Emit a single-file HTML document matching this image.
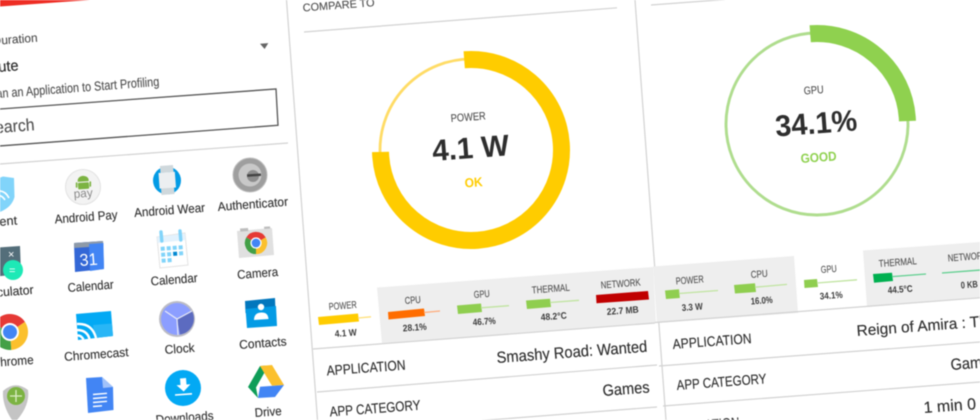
<!DOCTYPE html>
<html><head><meta charset="utf-8"><style>
html,body{margin:0;padding:0;background:#fff;width:980px;height:420px;overflow:hidden}
svg{display:block;filter:blur(.45px)}
text{font-family:"Liberation Sans",sans-serif}
.g{fill:#4f4f4f;stroke:#4f4f4f;stroke-width:.12}.s{font-size:10px;fill:#4f4f4f;stroke:#4f4f4f;stroke-width:.1}.v{font-size:9.5px;font-weight:bold;fill:#3d3d3d}
.a{font-size:12.5px;fill:#333;stroke:#333;stroke-width:.15}.t{font-size:14px;fill:#2f2f2f;stroke:#2f2f2f;stroke-width:.15}.w{font-size:16px;fill:#2e2e2e;stroke:#2e2e2e;stroke-width:.15}
.ln{stroke:#d2d2d2;stroke-width:1.2;fill:none}
</style></head><body>
<svg width="980" height="420" viewBox="0 0 980 420" xmlns="http://www.w3.org/2000/svg">
<defs>
<g id="chr"><path d="M0 0L-15.6 -9A18 18 0 0 1 15.6 -9Z" fill="#e53935"/><path d="M0 0L15.6 -9A18 18 0 0 1 0 18Z" fill="#fbc02d"/><path d="M0 0L0 18A18 18 0 0 1 -15.6 -9Z" fill="#43a047"/><circle r="9" fill="#fff"/><circle r="7" fill="#4285f4"/></g>
</defs>
<rect width="980" height="420" fill="#fff"/>
<!-- red bar -->
<polygon points="0,0 90,0 0,6.5" fill="#ee2d24"/>
<!-- dividers -->
<path class="ln" d="M286.5 0L317.5 420M635 0L666 420"/>
<!-- left panel -->
<text class="g" x="-7" y="45" font-size="12" textLength="45" lengthAdjust="spacingAndGlyphs" transform="rotate(-4.3 -7 45)">Duration</text>
<polygon points="260,43.7 268.3,43.1 264.6,49" fill="#666"/>
<text x="-37" y="74.5" font-size="15" fill="#2b2b2b" stroke="#2b2b2b" stroke-width=".2" textLength="56" lengthAdjust="spacingAndGlyphs" transform="rotate(-4.3 -37 74.5)">1 Minute</text>
<text class="g" x="-16" y="99" font-size="13" textLength="176" lengthAdjust="spacingAndGlyphs" transform="rotate(-4.3 -16 99)">Scan an Application to Start Profiling</text>
<polygon points="-10,109.7 276,89 278,125.3 -10,146.7" fill="#fff" stroke="#555" stroke-width="1.3"/>
<text class="g" x="-15" y="134" font-size="17" textLength="50" lengthAdjust="spacingAndGlyphs" transform="rotate(-4.3 -15 134)">Search</text>
<path class="ln" d="M0 164L288 143"/>
<!-- row1 icons -->
<path d="M-12 182L3 176.5L14 178L14.5 197Q12 207 0 212Q-12 207 -13 197Z" fill="#81d4fa"/>
<path d="M-3 191Q5 190 9 198M-3 195.5Q2 195 5 200" stroke="#fff" stroke-width="1.6" fill="none"/>
<circle cx="83" cy="187" r="17.5" fill="#f3f3f3" stroke="#e2e2e2"/>
<path d="M78 180.8a5.5 4.5 0 0 1 11 -.8v1.5h-11z" fill="#7cb342" transform="rotate(-4 83 185)"/>
<rect x="78" y="182.6" width="11" height="6.5" rx="1" fill="#7cb342" transform="rotate(-4 83 185)"/>
<path d="M76.6 183V187M90.3 182V186" stroke="#7cb342" stroke-width="1.6" stroke-linecap="round"/>
<text x="74" y="198" font-size="12" fill="#8a8a8a" textLength="19" lengthAdjust="spacingAndGlyphs" transform="rotate(-4.3 74 198)">pay</text>
<circle cx="167" cy="180.5" r="14" fill="#039be5"/>
<polygon points="160,166 173,165 173.5,172 160.5,173" fill="#cfd8dc"/><polygon points="161,188 174,187 174.5,194 161.5,195" fill="#cfd8dc"/>
<polygon points="158.5,173 174.8,171.7 176,187.5 159.6,188.6" fill="#eceff1"/>
<circle cx="250" cy="175" r="17" fill="#9e9e9e" stroke="#bdbdbd"/><circle cx="250" cy="175" r="11.5" fill="#c8c8c8"/><circle cx="253" cy="176" r="6" fill="#8d8d8d"/><rect x="247" y="174" width="14" height="2.4" fill="#444" transform="rotate(-4 253 175)"/>
<!-- row1 labels -->
<text class="a" x="-16" y="227" textLength="33.500" lengthAdjust="spacingAndGlyphs" transform="rotate(-4.3 -16 227)">Agent</text>
<text class="a" x="55" y="223.5" textLength="63" lengthAdjust="spacingAndGlyphs" transform="rotate(-4.3 55 223.5)">Android Pay</text>
<text class="a" x="134.5" y="217" textLength="71" lengthAdjust="spacingAndGlyphs" transform="rotate(-4.3 134.5 217)">Android Wear</text>
<text class="a" x="218" y="211" textLength="70.5" lengthAdjust="spacingAndGlyphs" transform="rotate(-4.3 218 211)">Authenticator</text>
<!-- row2 -->
<polygon points="-10,248 20,246 21,274 -9,277" fill="#546e7a"/>
<text x="8" y="258" font-size="11" fill="#fff">×</text>
<circle cx="13" cy="270" r="10" fill="#1de9b6"/><text x="9" y="274" font-size="11" fill="#fff">=</text>
<polygon points="74,243 103,241 104,269 75,272" fill="#3367d6"/>
<polygon points="74,243 103,241 103.3,246 74.3,248" fill="#8e9aa8"/>
<polygon points="89,244 103.4,243 104,269 90,271" fill="#4285f4"/>
<text x="80" y="266" font-size="17" fill="#fff" textLength="18" lengthAdjust="spacingAndGlyphs" transform="rotate(-4.3 80 266)">31</text>
<polygon points="157,237 185,233 188,265 160,268" fill="#fff" stroke="#e3e3e3"/>
<polygon points="157,237 185,233.5 185.5,240 157.5,243" fill="#e3f2fd"/>
<path d="M161 232L161.8 241M180 231L180.8 240" stroke="#81d4fa" stroke-width="3.4" stroke-linecap="round"/>
<g fill="#81d4fa" transform="rotate(-4.3 172 252)"><rect x="161" y="246" width="4" height="4"/><rect x="167" y="246" width="4" height="4"/><rect x="173" y="246" width="4" height="4"/><rect x="179" y="246" width="4" height="4"/><rect x="161" y="252" width="4" height="4"/><rect x="167" y="252" width="4" height="4"/><rect x="173" y="252" width="4" height="4" fill="#0288d1"/><rect x="179" y="252" width="4" height="4"/><rect x="161" y="258" width="4" height="4"/><rect x="167" y="258" width="4" height="4"/></g>
<polygon points="237,231 272,228 274,255 239,258" fill="#e0e0e0"/>
<polygon points="240,228.500 248,228 248.300,231 240.300,231.600" fill="#bdbdbd"/><polygon points="264,226.800 270,226.400 270.300,228.500 264.300,229" fill="#bdbdbd"/>
<use href="#chr" transform="translate(256 243) scale(.62)"/>
<text class="a" x="-21" y="298" textLength="55" lengthAdjust="spacingAndGlyphs" transform="rotate(-4.3 -21 298)">Calculator</text>
<text class="a" x="68" y="292" textLength="46" lengthAdjust="spacingAndGlyphs" transform="rotate(-4.3 68 292)">Calendar</text>
<text class="a" x="151" y="285.5" textLength="47" lengthAdjust="spacingAndGlyphs" transform="rotate(-4.3 151 285.5)">Calendar</text>
<text class="a" x="237.5" y="279" textLength="41" lengthAdjust="spacingAndGlyphs" transform="rotate(-4.3 237.5 279)">Camera</text>
<!-- row3 -->
<use href="#chr" transform="translate(10 332) rotate(-4)"/>
<polygon points="76,314 111,311 113,336 78,340" fill="#03a9f4"/>
<polygon points="93,325 112,323.5 113,336 95,338" fill="#29b6f6"/>
<path d="M77 324Q92 323 96 338M77 330Q87 330 89.5 339M77 335.5Q81 335 83.5 339.5" stroke="#fff" stroke-width="2.4" fill="none"/>
<circle cx="177" cy="319" r="18" fill="#bcbcc4"/><circle cx="177" cy="319" r="16" fill="#8c9eff"/>
<path d="M177 319L192 311A16 16 0 0 1 180 334.5Z" fill="#5c6bc0"/>
<path d="M165 311L177 319L192 311M177 319L178 335" stroke="#e8eaf6" stroke-width="1.2" fill="none"/>
<polygon points="245,301 275,298 275.5,311 245.5,313" fill="#0277bd"/>
<polygon points="245.5,309 276,306 277,326 247,328" fill="#039be5"/>
<circle cx="261" cy="307" r="3.2" fill="#fff"/><path d="M254 320Q254 313 261 312.500Q268 312 268.500 319Z" fill="#fff"/>
<text class="a" x="-8" y="367" textLength="42" lengthAdjust="spacingAndGlyphs" transform="rotate(-4.3 -8 367)">Chrome</text>
<text class="a" x="64.500" y="361" textLength="64.500" lengthAdjust="spacingAndGlyphs" transform="rotate(-4.3 64.500 361)">Chromecast</text>
<text class="a" x="165" y="354" textLength="30" lengthAdjust="spacingAndGlyphs" transform="rotate(-4.3 165 354)">Clock</text>
<text class="a" x="239.500" y="349" textLength="47.500" lengthAdjust="spacingAndGlyphs" transform="rotate(-4.3 239.500 349)">Contacts</text>
<!-- row4 -->
<path d="M3 391Q15 380 28 390Q30 405 17 420L12 420Q2 405 3 391Z" fill="#c4c4c4"/>
<circle cx="16" cy="396" r="9" fill="#7cb342"/><path d="M10 396H22M16 390V402" stroke="#dcedc8" stroke-width="1.3"/>
<polygon points="86,378 102,377 113,387 113.500,410 88,413" fill="#4285f4"/>
<polygon points="102,377 113,387 103,388" fill="#a1c2fa"/>
<path d="M93 394.500L107 393.300M93 398.500L107 397.300M93 402.500L107 401.300M93 406.500L102 405.800" stroke="#fff" stroke-width="1.400"/>
<circle cx="183" cy="388" r="18" fill="#03a9f4"/>
<path d="M180 378.500L186 378L186.500 384.500L190.500 384.200L183.700 391.500L176.500 385.200L180.500 385Z" fill="#fff"/>
<path d="M175 395L192 393.800" stroke="#fff" stroke-width="1.600"/>
<polygon points="248,387 260,366 268.500,365.500 256,387.500 258,398" fill="#0f9d58"/>
<polygon points="260,366 272,365 284,385 272,385.800" fill="#fbc02d"/>
<polygon points="260,386.800 284,385 275,397 258,398" fill="#4285f4"/>
<text class="a" x="156" y="424" textLength="58" lengthAdjust="spacingAndGlyphs" transform="rotate(-4.300 156 424)">Downloads</text>
<text class="a" x="255" y="417" textLength="27" lengthAdjust="spacingAndGlyphs" transform="rotate(-4.300 255 417)">Drive</text>

<!-- panel 2 -->
<text class="g" x="303" y="11.500" font-size="11" textLength="72" lengthAdjust="spacingAndGlyphs" transform="rotate(-4.300 303 11.500)">COMPARE TO</text>
<path class="ln" d="M304 32L617 7.800M651 5L725 -.5"/>
<circle cx="471" cy="150" r="91" fill="none" stroke="#ffdc66" stroke-width="2.800"/>
<circle cx="471" cy="150" r="90.500" fill="none" stroke="#ffcc00" stroke-width="17" stroke-dasharray="431.200 600" transform="rotate(-94.300 471 150)"/>
<text class="s" x="451" y="122" style="font-size:11px" textLength="35" lengthAdjust="spacingAndGlyphs" transform="rotate(-4.300 451 122)">POWER</text>
<text x="433" y="161" font-size="30" font-weight="bold" fill="#2e2e2e" textLength="77" lengthAdjust="spacingAndGlyphs" transform="rotate(-4.300 433 161)">4.1 W</text>
<text x="465" y="187.500" font-size="13" font-weight="bold" fill="#ffcc00" textLength="18" lengthAdjust="spacingAndGlyphs" transform="rotate(-4.300 465 187.500)">OK</text>
<!-- stats panel 2 -->
<polygon points="377,287.500 653,267 656,323 382,343.500" fill="#eeeeee"/>
<path class="ln" d="M313 349L655 323M317 392L657 365M320 433L657 407"/>
<text class="s" x="329" y="310" textLength="28" lengthAdjust="spacingAndGlyphs" transform="rotate(-4.300 329 310)">POWER</text>
<polygon points="318,317 358,313.500 359,321.500 319,325" fill="#ffcc00"/><path d="M358 318L371 316.800" stroke="#ffe07a" stroke-width="1.300"/>
<text class="v" x="335" y="337" textLength="22" lengthAdjust="spacingAndGlyphs" transform="rotate(-4.300 335 337)">4.1 W</text>
<text class="s" x="405" y="304" textLength="16" lengthAdjust="spacingAndGlyphs" transform="rotate(-4.300 405 304)">CPU</text>
<polygon points="388,312 424,308.500 425,316 388.500,319.500" fill="#ff6d00"/><path d="M424 312.500L440 311" stroke="#ffab7a" stroke-width="1.300"/>
<text class="v" x="403" y="331.500" textLength="24" lengthAdjust="spacingAndGlyphs" transform="rotate(-4.300 403 331.500)">28.1%</text>
<text class="s" x="474" y="298" textLength="16" lengthAdjust="spacingAndGlyphs" transform="rotate(-4.300 474 298)">GPU</text>
<polygon points="457,305.500 481,303.500 482,312 458,314" fill="#8fce4f"/><path d="M481 307.800L509 305.700" stroke="#c0e4a0" stroke-width="1.300"/>
<text class="v" x="473" y="325.500" textLength="23" lengthAdjust="spacingAndGlyphs" transform="rotate(-4.300 473 325.500)">46.7%</text>
<text class="s" x="532" y="293.500" textLength="38" lengthAdjust="spacingAndGlyphs" transform="rotate(-4.300 532 293.500)">THERMAL</text>
<polygon points="526,300.500 550,298.700 551,307 527,309" fill="#8fce4f"/><path d="M550 302.500L579 300.300" stroke="#c0e4a0" stroke-width="1.300"/>
<text class="v" x="541" y="320.500" textLength="26" lengthAdjust="spacingAndGlyphs" transform="rotate(-4.300 541 320.500)">48.2°C</text>
<text class="s" x="601" y="288.500" textLength="40" lengthAdjust="spacingAndGlyphs" transform="rotate(-4.300 601 288.500)">NETWORK</text>
<polygon points="596,295 648,291 649,299.500 596.500,303.300" fill="#c00000"/>
<text class="v" x="607" y="315" textLength="32" lengthAdjust="spacingAndGlyphs" transform="rotate(-4.300 607 315)">22.7 MB</text>
<text class="t" x="327" y="375.500" textLength="79" lengthAdjust="spacingAndGlyphs" transform="rotate(-4.300 327 375.500)">APPLICATION</text>
<text class="w" x="497" y="363" textLength="151" lengthAdjust="spacingAndGlyphs" transform="rotate(-4.300 497 363)">Smashy Road: Wanted</text>
<text class="t" x="330" y="416.500" textLength="91" lengthAdjust="spacingAndGlyphs" transform="rotate(-4.300 330 416.500)">APP CATEGORY</text>
<text class="w" x="603" y="396" textLength="47" lengthAdjust="spacingAndGlyphs" transform="rotate(-4.300 603 396)">Games</text>

<!-- panel 3 -->
<circle cx="817" cy="124" r="91" fill="none" stroke="#afdd8e" stroke-width="2.900"/>
<circle cx="817" cy="124" r="90.500" fill="none" stroke="#8fd14f" stroke-width="17" stroke-dasharray="146 600" transform="rotate(-94.300 817 124)"/>
<text class="s" x="804" y="94.500" style="font-size:11px" textLength="20" lengthAdjust="spacingAndGlyphs" transform="rotate(-4.300 804 94.500)">GPU</text>
<text x="776" y="136.500" font-size="30" font-weight="bold" fill="#2e2e2e" textLength="82" lengthAdjust="spacingAndGlyphs" transform="rotate(-4.300 776 136.500)">34.1%</text>
<text x="801" y="163" font-size="13" font-weight="bold" fill="#8fd14f" textLength="36" lengthAdjust="spacingAndGlyphs" transform="rotate(-4.300 801 163)">GOOD</text>
<polygon points="653,266.500 794,256 798,313 657,323" fill="#eeeeee"/>
<polygon points="863,250.500 980,242 980,298 867,307" fill="#eeeeee"/>
<path class="ln" d="M655 322.500L980 297.800M659 366L980 342M663 406L980 382"/>
<text class="s" x="676" y="284.500" textLength="28" lengthAdjust="spacingAndGlyphs" transform="rotate(-4.300 676 284.500)">POWER</text>
<polygon points="665,290.500 679,289.300 679.800,298 666,299" fill="#8fce4f"/><path d="M679 293.500L718 290.500" stroke="#c0e4a0" stroke-width="1.300"/>
<text class="v" x="682" y="311" textLength="21" lengthAdjust="spacingAndGlyphs" transform="rotate(-4.300 682 311)">3.3 W</text>
<text class="s" x="751" y="278" textLength="17" lengthAdjust="spacingAndGlyphs" transform="rotate(-4.300 751 278)">CPU</text>
<polygon points="734,285 755,283.300 756,292 735,293.500" fill="#8fce4f"/><path d="M755 287.200L787 284.400" stroke="#c0e4a0" stroke-width="1.300"/>
<text class="v" x="751" y="304.500" textLength="22" lengthAdjust="spacingAndGlyphs" transform="rotate(-4.300 751 304.500)">16.0%</text>
<text class="s" x="821" y="273" textLength="16" lengthAdjust="spacingAndGlyphs" transform="rotate(-4.300 821 273)">GPU</text>
<polygon points="804,280 817,279 818,287 804.500,288" fill="#8fce4f"/><path d="M817 283L857 279.800" stroke="#c0e4a0" stroke-width="1.300"/>
<text class="v" x="820" y="299.500" textLength="23" lengthAdjust="spacingAndGlyphs" transform="rotate(-4.300 820 299.500)">34.1%</text>
<text class="s" x="879" y="267" textLength="38" lengthAdjust="spacingAndGlyphs" transform="rotate(-4.300 879 267)">THERMAL</text>
<polygon points="873,274 892,272.700 893,281 874,282.700" fill="#00b050"/><path d="M892 276.600L926 274" stroke="#5fcf8f" stroke-width="1.300"/>
<text class="v" x="888" y="293.500" textLength="25" lengthAdjust="spacingAndGlyphs" transform="rotate(-4.300 888 293.500)">44.5°C</text>
<text class="s" x="948" y="261.500" textLength="40" lengthAdjust="spacingAndGlyphs" transform="rotate(-4.300 948 261.500)">NETWORK</text>
<path d="M942 273L985 269.700" stroke="#5fcf8f" stroke-width="1.300"/>
<text class="v" x="961" y="288.500" textLength="17" lengthAdjust="spacingAndGlyphs" transform="rotate(-4.300 961 288.500)">0 KB</text>
<text class="t" x="673" y="349" textLength="79" lengthAdjust="spacingAndGlyphs" transform="rotate(-4.300 673 349)">APPLICATION</text>
<text class="w" x="857" y="336" style="font-size:15.4px" transform="rotate(-4.300 857 336)">Reign of Amira : The</text>
<text class="t" x="677" y="390" textLength="90" lengthAdjust="spacingAndGlyphs" transform="rotate(-4.300 677 390)">APP CATEGORY</text>
<text class="w" x="951" y="370" textLength="47" lengthAdjust="spacingAndGlyphs" transform="rotate(-4.300 951 370)">Games</text>
<text class="w" x="924" y="413" transform="rotate(-4.300 924 413)">1 min 0 s</text>
<text class="t" x="680" y="431.500" textLength="60" lengthAdjust="spacingAndGlyphs" transform="rotate(-4.300 680 431.500)">DURATION</text>
</svg>
</body></html>
